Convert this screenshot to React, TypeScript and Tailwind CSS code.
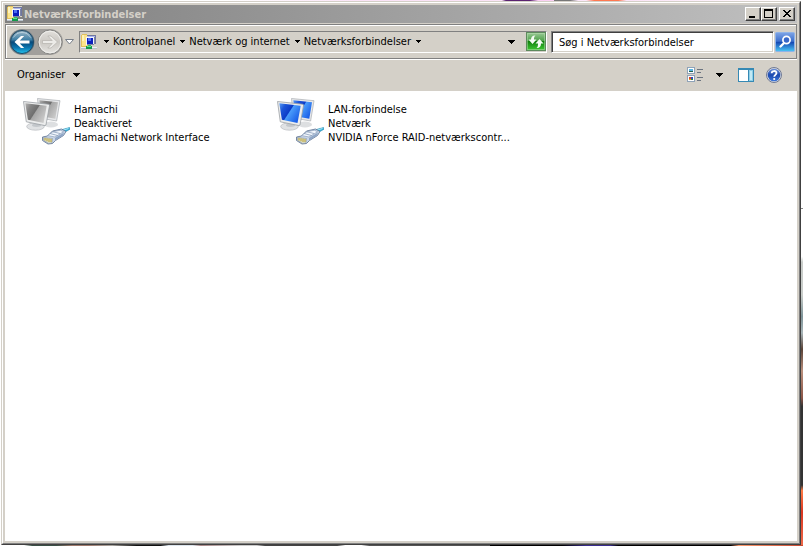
import { useId, type ReactNode } from "react";

function NetworkFolderIcon() {
  return (
    <svg width="16" height="16" viewBox="0 0 16 16" shapeRendering="crispEdges" aria-hidden="true">
      <path d="M0 1h1v-1h6v13h-7z" fill="#e2c05c" />
      <path d="M1 1h5v11h-5z" fill="#fbe58c" />
      <path d="M1 1h2v6h-2z" fill="#fdf3bd" />
      <path d="M6 0h9v11h-9z" fill="#d9d5c4" />
      <path d="M6 1h8v1h-8zM14 1h1v9h-1z" fill="#6f76a0" />
      <path d="M7 2h7v8h-7z" fill="#aab6ee" />
      <path d="M5 3h8v8h-8z" fill="#f2f4fb" />
      <path d="M13 3h1v7h-1zM6 10h7v1h-7z" fill="#7d84a4" />
      <path d="M6 4h6v6h-6z" fill="#0c1ebc" />
      <path d="M7 4h3v3h-3z" fill="#4b6df0" />
      <path d="M7 11h3v2h-3z" fill="#2eb86a" />
      <path d="M5 12h6v3h-6z" fill="#14994a" />
      <path d="M6 12h4v1h-4z" fill="#5fe093" />
      <path d="M0 13h5v2h-5zM11 13h5v2h-5z" fill="#b9c2cc" />
      <path d="M0 13h5v1h-5zM11 13h5v1h-5z" fill="#edf1f4" />
    </svg>
  );
}

function SmallCaret() {
  return (
    <svg width="5" height="3" viewBox="0 0 5 3" shapeRendering="crispEdges" aria-hidden="true">
      <path d="M0 0h5v1h-1v1h-1v1h-1v-1h-1v-1h-1z" />
    </svg>
  );
}

function Caret() {
  return (
    <svg width="7" height="4" viewBox="0 0 7 4" shapeRendering="crispEdges" aria-hidden="true">
      <path d="M0 0h7v1h-1v1h-1v1h-1v1h-1v-1h-1v-1h-1v-1h-1z" />
    </svg>
  );
}

function BackIcon() {
  return (
    <svg width="26" height="26" viewBox="0 0 26 26" aria-hidden="true">
      <defs>
        <linearGradient id="back-body" x1="0" y1="0" x2="0" y2="1">
          <stop offset="0" stopColor="#9fb9c8" />
          <stop offset=".4" stopColor="#3f7fa5" />
          <stop offset=".5" stopColor="#07497a" />
          <stop offset=".75" stopColor="#0b77b0" />
          <stop offset="1" stopColor="#25c4ee" />
        </linearGradient>
      </defs>
      <circle cx="13" cy="13" r="12.500" fill="#66757f" />
      <circle cx="13" cy="13" r="11.500" fill="url(#back-body)" stroke="#1f4a66" />
      <path d="M4.500 8.500A9.700 9.700 0 0 1 21.500 8.500" fill="none" stroke="#d3e3ec" opacity=".6" />
      <path d="M5.500 13l6.500-6h3.200l-4.400 4.500h9.700v3h-9.700l4.400 4.500H12z" fill="#fff" />
    </svg>
  );
}

function ForwardIcon() {
  return (
    <svg width="26" height="26" viewBox="0 0 26 26" aria-hidden="true">
      <defs>
        <linearGradient id="forward-body" x1="0" y1="0" x2="0" y2="1">
          <stop offset="0" stopColor="#e2e0dc" />
          <stop offset=".5" stopColor="#cbc8c3" />
          <stop offset="1" stopColor="#e6e5e1" />
        </linearGradient>
      </defs>
      <circle cx="13" cy="13" r="12" fill="url(#forward-body)" stroke="#868684" />
      <circle cx="13" cy="13" r="10.800" fill="none" stroke="#efeeeb" />
      <path d="M20.500 13L14 7h-3.200l4.400 4.500H5.500v3h9.700L10.800 19H14z" fill="#ecebe8" stroke="#b4b2ad" strokeWidth=".7" />
    </svg>
  );
}

function RefreshIcon() {
  return (
    <svg width="20" height="19" viewBox="0 0 20 19" aria-hidden="true">
      <defs>
        <linearGradient id="refresh-body" x1="0" y1="0" x2="0" y2="1">
          <stop offset="0" stopColor="#9ccb98" />
          <stop offset=".45" stopColor="#4fa24b" />
          <stop offset=".5" stopColor="#12800f" />
          <stop offset="1" stopColor="#3fcb33" />
        </linearGradient>
      </defs>
      <rect x=".5" y=".5" width="19" height="18" fill="url(#refresh-body)" stroke="#5c8a5c" />
      <rect x="1.500" y="1.500" width="17" height="16" fill="none" stroke="#b9e0b4" opacity=".5" />
      <path d="M9.500 3.500C6.500 3.200 5 5 5 7.500H2.500l4 4.500 4-4.500H8c0-1.800.2-3 1.500-4z" fill="#f4fbf3" />
      <path d="M10.500 16c3 .3 4.500-1.500 4.500-4.500h2.500l-4-4.500-4 4.500H12c0 2-.2 3.500-1.500 4.500z" fill="#f4fbf3" />
    </svg>
  );
}

function SearchIcon() {
  return (
    <svg width="20" height="20" viewBox="0 0 20 20" aria-hidden="true">
      <defs>
        <linearGradient id="search-body" x1="0" y1="0" x2="0" y2="1">
          <stop offset="0" stopColor="#7ea4e6" />
          <stop offset=".46" stopColor="#3c6fcc" />
          <stop offset=".52" stopColor="#1549b4" />
          <stop offset="1" stopColor="#4cc8f5" />
        </linearGradient>
      </defs>
      <rect x=".5" y=".5" width="19" height="19" rx="1" fill="url(#search-body)" stroke="#8fb3e8" />
      <path d="M9 11l-3.500 3.500" stroke="#fff" strokeWidth="2.400" strokeLinecap="round" />
      <circle cx="11.500" cy="8" r="3.600" fill="#3968c8" stroke="#fff" strokeWidth="1.700" />
    </svg>
  );
}

function ViewsIcon() {
  return (
    <svg width="16" height="16" viewBox="0 0 16 16" shapeRendering="crispEdges" aria-hidden="true">
      <path d="M0 0h8v7h-8zM0 8h8v7h-8z" fill="#8fa3b8" />
      <path d="M1 1h6v5h-6zM1 9h6v5h-6z" fill="#fff" />
      <path d="M2 2h4v2h-4z" fill="#58b4e0" />
      <path d="M2 4h4v1h-4z" fill="#24604c" />
      <path d="M2 10h2v2h-2z" fill="#d8452c" />
      <path d="M4 10h2v2h-2z" fill="#314cb8" />
      <path d="M2 12h2v1h-2z" fill="#e4a322" />
      <path d="M4 12h2v1h-2z" fill="#2c8a3c" />
      <path d="M10 2h6v1h-6zM10 5h4v1h-4zM10 10h6v1h-6zM10 13h4v1h-4z" fill="#6c7480" />
    </svg>
  );
}

function PreviewPaneIcon() {
  return (
    <svg width="16" height="14" viewBox="0 0 16 14" shapeRendering="crispEdges" aria-hidden="true">
      <path d="M0 0h16v14h-16z" fill="#3689b4" />
      <path d="M1 2h9v11h-9z" fill="#fff" />
      <path d="M11 2h4v11h-4z" fill="#8fd0e8" />
      <path d="M12 3h2v9h-2z" fill="#c3e9f4" />
    </svg>
  );
}

function HelpIcon() {
  return (
    <svg width="16" height="16" viewBox="0 0 16 16" aria-hidden="true">
      <defs>
        <linearGradient id="help-body" x1="0" y1="0" x2="0" y2="1">
          <stop offset="0" stopColor="#6f93dc" />
          <stop offset=".5" stopColor="#1b48ae" />
          <stop offset="1" stopColor="#3d78dc" />
        </linearGradient>
      </defs>
      <circle cx="8" cy="8" r="7.500" fill="#d7dae2" stroke="#707a94" />
      <circle cx="8" cy="8" r="6.300" fill="url(#help-body)" />
      <path d="M5.700 6.300C5.700 3.300 10.500 3.300 10.500 6.100 10.500 7.800 8.200 7.900 8.200 9.700" fill="none" stroke="#fff" strokeWidth="1.800" />
      <circle cx="8.200" cy="12" r="1.100" fill="#fff" />
    </svg>
  );
}

function ConnectionIcon({ enabled }: { enabled: boolean }) {
  const id = useId();
  return (
    <svg className="shrink-0" width="48" height="48" viewBox="0 0 48 48" aria-hidden="true">
      <defs>
        <linearGradient id={id} x1="0" y1="0" x2="1" y2=".6">
          <stop offset="0" stopColor={enabled ? "#5b9df5" : "#b4b4b4"} />
          <stop offset=".25" stopColor={enabled ? "#1c55d8" : "#858585"} />
          <stop offset=".52" stopColor={enabled ? "#0c3cc8" : "#6e6e6e"} />
          <stop offset=".56" stopColor={enabled ? "#4a9cfa" : "#a6a6a6"} />
          <stop offset="1" stopColor={enabled ? "#1b60e8" : "#c9c9c9"} />
        </linearGradient>
      </defs>
      <ellipse cx="29" cy="27.500" rx="7" ry="3" fill="#dddfe1" />
      <path d="M15.500 1.500l22.500 2.200-3.400 20.300-17-3z" fill="#e7e8ea" stroke="#a9adb2" strokeWidth=".7" />
      <path d="M17.300 3.300l18.700 1.900-2.700 16.600-14-2.500z" fill={`url(#${id})`} />
      <path d="M11 24l8 1 .5 4.500h-8z" fill="#b7bbc0" />
      <ellipse cx="13.500" cy="29.500" rx="8.800" ry="3.700" fill="#e0e2e4" stroke="#b7babe" strokeWidth=".7" />
      <ellipse cx="14.500" cy="28.300" rx="4.500" ry="1.700" fill="#c3c7cb" />
      <path d="M1.500 4.500L27 7.300l.6.700-3.600 20-1 .6-18.700-3.800z" fill="#eceded" stroke="#9b9fa4" strokeWidth=".8" />
      <path d="M3.300 6.300l21.400 2.400-3.200 17.300-15.600-3.200z" fill={`url(#${id})`} />
      <path d="M40 35.500l-1.500-2.500 5.500-1.500 3.500-1 .5 1.700-3.500 2z" fill="#39b3dc" stroke="#2688ae" strokeWidth=".6" />
      <path d="M40 33.500l6.500-2" stroke="#a8e8f8" strokeWidth="1" />
      <path d="M20.500 40l5-1 5-5 9-2 4.500 2.500-2.500 4-8 5-3 3-4.500.5-5.500-3.500z" fill="#c9d6e8" stroke="#596f8e" strokeWidth=".8" />
      <path d="M25.500 38.500l5.500-3.800 7.500-1.500 3 1.600-8.500 5.200z" fill="#f2f7fd" stroke="#7d92b0" strokeWidth=".6" />
      <path d="M33 41l9-5.500-1 3-8 5z" fill="#8fa6c6" />
      <path d="M28 36.500l7.500 2M31 34.800l7 1.700" stroke="#7d92b0" strokeWidth=".7" />
      <path d="M21.300 40.500l9.200 1-.5 4.500-3.500.3-5-3z" fill="#dfe3d0" stroke="#7f8b98" strokeWidth=".5" />
      <path d="M23 41v2.500M25 41.300v3M27 41.600v3.400M29 42v3" stroke="#b89c28" strokeWidth="1" />
    </svg>
  );
}

function CaptionButton({ label, children }: { label: string; children: ReactNode }) {
  return (
    <button
      type="button"
      aria-label={label}
      className="h-3.5 w-4 border border-t-white border-l-white border-r-[#404040] border-b-[#404040] bg-[#d4d0c8] shadow-[inset_-1px_-1px_0_#808080]"
    >
      <svg width="14" height="12" viewBox="0 0 14 12" shapeRendering="crispEdges" aria-hidden="true">
        {children}
      </svg>
    </button>
  );
}

function TitleBar() {
  return (
    <header className="flex h-[18px] items-center bg-linear-to-r from-[#808080] to-[#c0c0c0] px-0.5">
      <NetworkFolderIcon />
      <h1 className="ml-px flex-1 pt-px font-['DejaVu_Sans_Condensed','DejaVu_Sans',sans-serif] text-[11px] leading-4 font-bold text-[#d4d0c8]">
        Netværksforbindelser
      </h1>
      <CaptionButton label="Minimer">
        <path d="M3 8h6v2h-6z" />
      </CaptionButton>
      <CaptionButton label="Maksimer">
        <path d="M2 1h9v9h-9zM3 3v6h7v-6z" fillRule="evenodd" />
      </CaptionButton>
      <span className="w-0.5" />
      <CaptionButton label="Luk">
        <path d="M3 2h2v1h1v1h2v-1h1v-1h2v1h-1v1h-1v1h-1v1h1v1h1v1h1v1h-2v-1h-1v-1h-2v1h-1v1h-2v-1h1v-1h1v-1h1v-1h-1v-1h-1v-1h-1z" />
      </CaptionButton>
    </header>
  );
}

const crumbs = ["Kontrolpanel", "Netværk og internet", "Netværksforbindelser"];

function AddressBar() {
  return (
    <div className="mt-px border border-[#808080] shadow-[inset_1px_1px_0_#fff,0_1px_0_#fff]">
      <div className="flex h-[33px] items-center pr-px pl-[3px]">
        <div className="flex h-[26px] items-center gap-0.5 rounded-full bg-[#a19f9c]">
          <button type="button" aria-label="Tilbage">
            <BackIcon />
          </button>
          <button type="button" aria-label="Frem" disabled>
            <ForwardIcon />
          </button>
        </div>
        <button type="button" aria-label="Seneste sider" className="ml-0.5">
          <svg width="9" height="6" viewBox="0 0 9 6" aria-hidden="true">
            <path d="M.5.5h8L4.500 5z" fill="#fff" stroke="#777e88" />
          </svg>
        </button>
        <nav
          aria-label="Adresse"
          className="ml-[5px] flex h-[22px] min-w-0 flex-1 items-center border border-t-[#808080] border-r-white border-b-white border-l-[#808080] pl-px"
        >
          <NetworkFolderIcon />
          <span className="ml-[7px]">
            <SmallCaret />
          </span>
          {crumbs.map((crumb) => (
            <div key={crumb} className="flex items-center">
              <a href="#" className="mr-[5px] ml-1 whitespace-nowrap">
                {crumb}
              </a>
              <SmallCaret />
            </div>
          ))}
          <button type="button" aria-label="Tidligere placeringer" className="mr-[11px] ml-auto">
            <Caret />
          </button>
          <button type="button" aria-label="Opdater">
            <RefreshIcon />
          </button>
        </nav>
        <input
          type="search"
          aria-label="Søg"
          placeholder="Søg i Netværksforbindelser"
          className="ml-1 h-[22px] w-[223px] rounded-none border border-t-[#808080] border-r-white border-b-white border-l-[#808080] bg-white pt-px pl-[7px] shadow-[inset_1px_1px_0_#404040,inset_-1px_-1px_0_#d4d0c8] outline-none placeholder:text-black"
        />
        <button type="button" aria-label="Søg" className="ml-px">
          <SearchIcon />
        </button>
      </div>
    </div>
  );
}

function Toolbar() {
  return (
    <div className="flex h-8 items-center pr-[15px] pl-3">
      <button type="button" className="flex items-center gap-2">
        Organiser
        <Caret />
      </button>
      <button type="button" aria-label="Skift visning" className="ml-auto">
        <ViewsIcon />
      </button>
      <button type="button" aria-label="Flere indstillinger" className="ml-[13px]">
        <Caret />
      </button>
      <button type="button" aria-label="Vis eksempelruden" className="ml-[15px]">
        <PreviewPaneIcon />
      </button>
      <button type="button" aria-label="Hjælp" className="ml-3">
        <HelpIcon />
      </button>
    </div>
  );
}

const connections = [
  { name: "Hamachi", status: "Deaktiveret", device: "Hamachi Network Interface", enabled: false },
  { name: "LAN-forbindelse", status: "Netværk", device: "NVIDIA nForce RAID-netværkscontr...", enabled: true },
];

export default function App() {
  return (
    <div className="flex min-h-screen flex-col bg-white font-['DejaVu_Sans_Condensed','DejaVu_Sans',sans-serif] text-[11px] leading-3.5 text-black [&_svg]:block">
      {/* slivers of the desktop show around the window */}
      <div className="h-px bg-[linear-gradient(90deg,#fff_0_28%,#fbe4f7_45%_62.500%,#5a2270_63%_66%,#fbd0f4_67%_69%,#777_69%_71%,#fce8fa_72%_73%,#ff7850_74%_77%,#fbe4f7_78%,#fff)]" />
      <div className="flex flex-1">
        <div className="w-px bg-white" />
        <div className="flex min-w-0 flex-1 border border-t-[#d4d0c8] border-r-[#404040] border-b-[#404040] border-l-[#d4d0c8]">
          <main className="flex min-w-0 flex-1 flex-col border border-t-white border-r-[#808080] border-b-[#808080] border-l-white bg-[#d4d0c8] p-0.5">
            <TitleBar />
            <AddressBar />
            <Toolbar />
            <ul className="flex flex-1 flex-wrap content-start bg-white pt-1.5 pl-[17px]">
              {connections.map((connection) => (
                <li key={connection.name} className="flex w-[254px] gap-1">
                  <ConnectionIcon enabled={connection.enabled} />
                  <div className="pt-1.5 whitespace-nowrap">
                    <p>{connection.name}</p>
                    <p>{connection.status}</p>
                    <p>{connection.device}</p>
                  </div>
                </li>
              ))}
            </ul>
          </main>
        </div>
        <div className="w-0.5 bg-[linear-gradient(#fff_0_38%,#888_38%_38.300%,#fff_38.300%_47%,#c9cdca_48%_54%,#7e9499_58%,#a8b5b8_61%,#5a4338_64%,#b98f7c_68%,#8b5547_73%,#333_74.500%_89%,#ff7a45_90%,#d93620_94%,#f06a4a)]" />
      </div>
      <div className="h-px bg-[linear-gradient(90deg,#fff_0_3%,#3a5046_4%_7%,#a07a6c_9%_11%,#a9a6a0_14%,#111_17%_20%,#dde6ee_21%_24%,#a88_25%,#ccc_30%_32%,#444_33%_42%,#fff_43%_45%,#555_46%_61%,#000_61%_70%,#3a2c90_73%_76%,#000_77%_91%,#fb9a6c_92%,#c84830)]" />
    </div>
  );
}
